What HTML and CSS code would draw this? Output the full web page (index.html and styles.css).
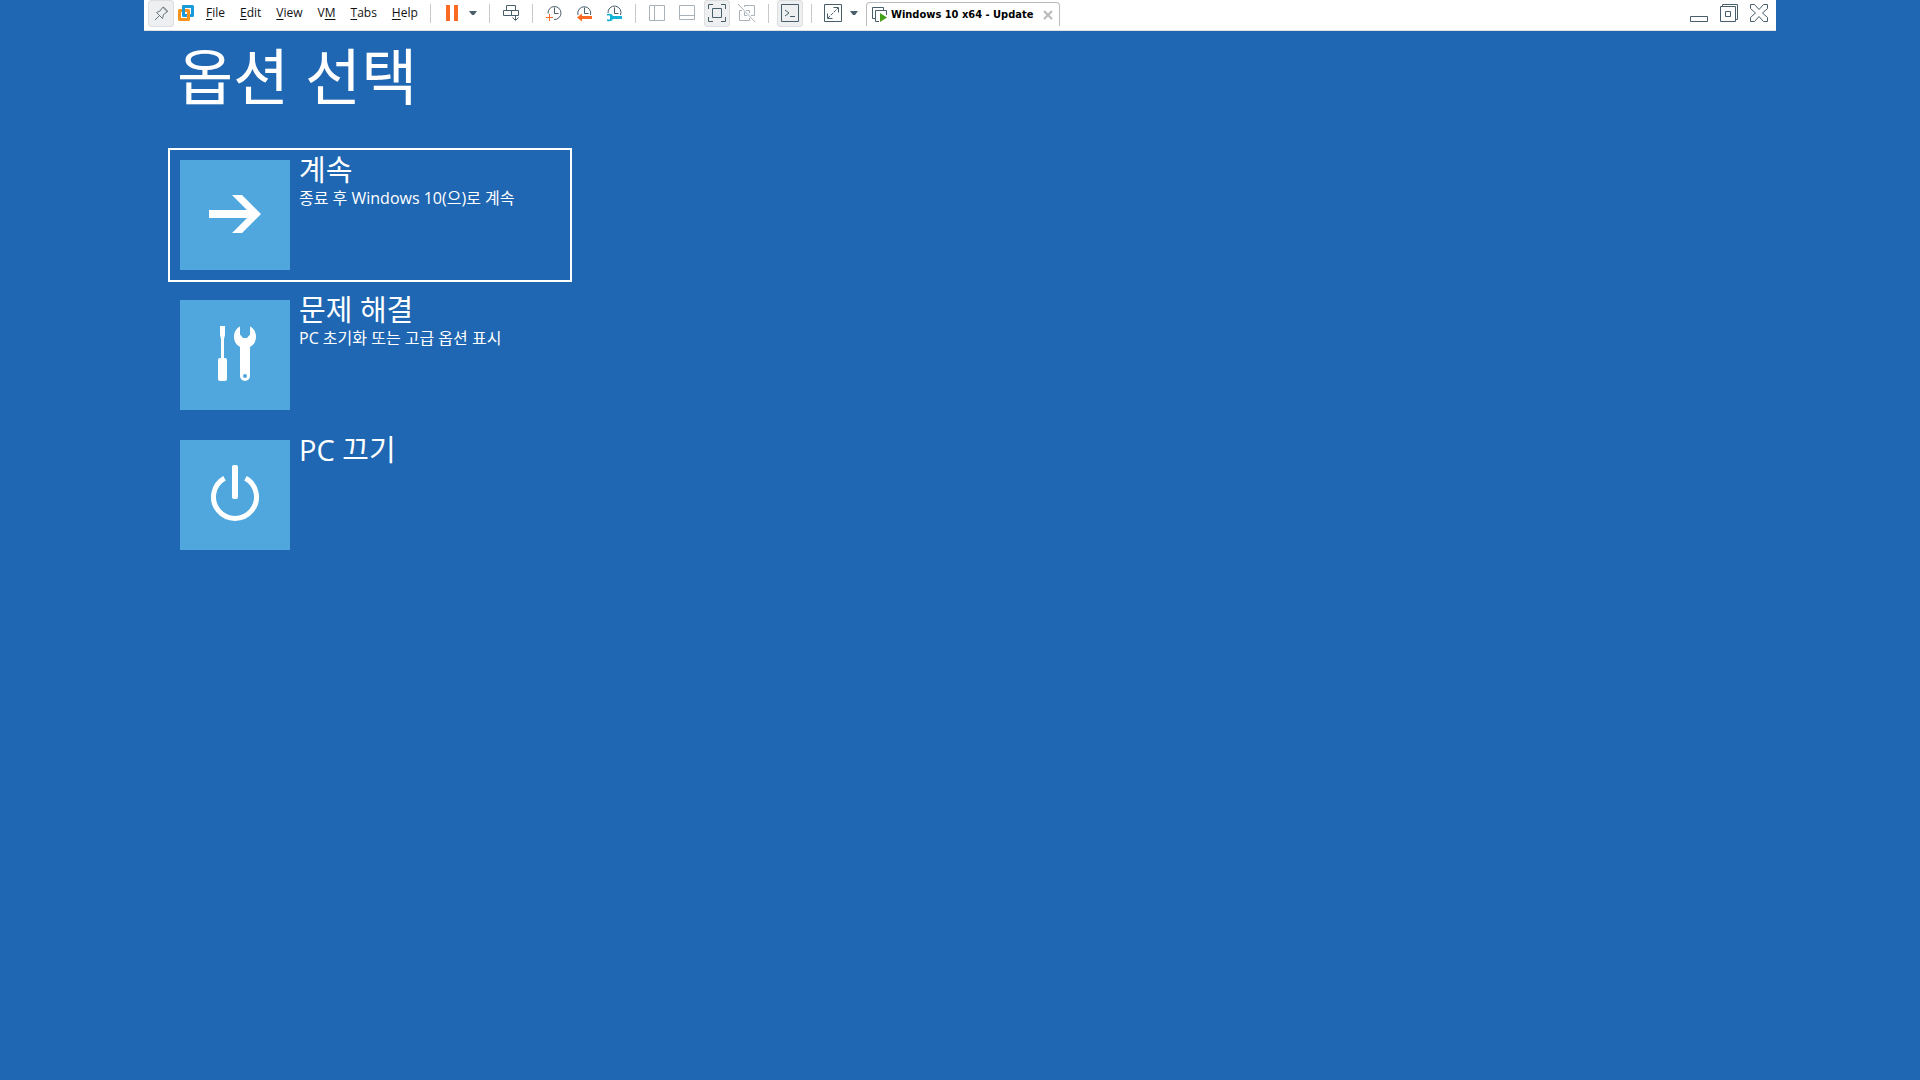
FILE: index.html
```html
<!DOCTYPE html>
<html lang="ko">
<head>
<meta charset="utf-8">
<title>Windows 10 x64 - Update</title>
<link rel="stylesheet" href="styles.css">
</head>
<body>
<header class="toolbar">
  <button class="tool pressed pin" aria-label="Pin"><svg viewBox="0 0 26 27"><path d="M7 20l4.500-4.500M8.500 12.500l6 6 1-4 3.500-2.500.5-1-4-4-1 .5-2.500 3.500zM14.500 7l5 5"/></svg></button>
  <svg class="logo" viewBox="0 0 18 18" aria-hidden="true"><path d="M6.500 2.500h9v9h-9z" stroke="#1a9bd7"/><path d="M2.500 6.500h9v9h-9z" stroke="#f7941d"/><path d="M6.500 9V2.500H9" stroke="#1a9bd7"/></svg>
  <nav class="menu">
    <a href="#"><u>F</u>ile</a>
    <a href="#"><u>E</u>dit</a>
    <a href="#"><u>V</u>iew</a>
    <a href="#">V<u>M</u></a>
    <a href="#"><u>T</u>abs</a>
    <a href="#"><u>H</u>elp</a>
  </nav>
  <div class="group">
    <button class="tool" aria-label="Suspend"><svg viewBox="0 0 26 27"><path class="orange-fill" d="M7 5h4v16H7zM15 5h4v16h-4z"/></svg></button>
    <button class="caret" aria-label="Power options"><svg viewBox="0 0 12 27"><path d="M2 11h8l-3 4H5z"/></svg></button>
  </div>
  <div class="group">
    <button class="tool" aria-label="Send Ctrl+Alt+Del"><svg viewBox="0 0 26 27"><path d="M8.500 5.500h9v5h-9zM5.500 10.500h8v5h-8zM13.500 10.500h7v5h-7zM17.500 15v5M14.500 17.500l3 3 3-3"/></svg></button>
  </div>
  <div class="group">
    <button class="tool" aria-label="Take snapshot"><svg viewBox="0 0 26 27"><path d="M7 13.500a6.500 6.500 0 1 1 6 6M13.500 7.500v6h4"/><path class="orange" d="M5 17.500h7M8.500 14v7"/></svg></button>
    <button class="tool" aria-label="Revert snapshot"><svg viewBox="0 0 26 27"><path d="M7 15a6.500 6.500 0 1 1 12.500 0M13.500 7.500v6h4"/><path class="orange-fill" d="M6 17.500l5-4V16h10v3H11v2.500z"/></svg></button>
    <button class="tool" aria-label="Manage snapshots"><svg viewBox="0 0 26 27"><path d="M7 13a6.500 6.500 0 1 1 12.500 2M13.500 7.500v6h4"/><path class="cyan-fill" d="M6 14q5-1 6 2h9v3h-9q-1 3-6 2v-1.500h3v-4H6z"/></svg></button>
  </div>
  <div class="group">
    <button class="tool muted" aria-label="Show library"><svg viewBox="0 0 26 27"><path d="M5.500 5.500h15v15h-15zM10.500 5.500v15"/></svg></button>
    <button class="tool muted" aria-label="Show thumbnail bar"><svg viewBox="0 0 26 27"><path d="M5.500 5.500h15v14h-15zM5.500 15.500h15"/></svg></button>
    <button class="tool pressed" aria-label="Full screen"><svg viewBox="0 0 26 27"><path d="M4.500 9V4.500H9M17 4.500h4.500V9M21.500 17v4.500H17M9 21.500H4.500V17M8.500 8.500h9v9h-9z"/></svg></button>
    <button class="tool muted" aria-label="Unity"><svg viewBox="0 0 26 27"><path d="M10.500 7V5.500h10v10H17M8 10.500H5.500v10h10V18M12 10.500h3.500V13M10.500 12v3.500H13M4 4l17 18"/></svg></button>
  </div>
  <div class="group">
    <button class="tool pressed" aria-label="Console view"><svg viewBox="0 0 26 27"><path d="M4.500 4.500h17v17h-17z"/><path d="M8 10l4 3-4 3M13 16.500h5"/></svg></button>
  </div>
  <div class="group">
    <button class="tool" aria-label="Stretch guest"><svg viewBox="0 0 26 27"><path d="M4.500 4.500h17v17h-17z"/><path d="M13.500 7.500h5v5M7.500 13.500v5h5"/><path d="M8 18L18 8" stroke-dasharray="3 1"/></svg></button>
    <button class="caret" aria-label="Stretch options"><svg viewBox="0 0 12 27"><path d="M2 11h8l-3 4H5z"/></svg></button>
  </div>
  <div class="tab">
    <svg class="tab-icon" viewBox="0 0 16 16" aria-hidden="true"><path d="M3.500 11.500H.5V.5h11v3M7 14.500H3.500v-11h11V8"/><path d="M8 6l7 4.500L8 15z" class="play"/></svg>
    <span>Windows 10 x64 - Update</span>
    <button class="tab-close" aria-label="Close tab"><svg viewBox="0 0 10 10"><path d="M1 1l8 8M9 1L1 9"/></svg></button>
  </div>
  <div class="window-controls">
    <button class="tool" aria-label="Minimize"><svg viewBox="0 0 26 27"><path d="M4.500 16.500h17v5h-17z"/></svg></button>
    <button class="tool" aria-label="Restore"><svg viewBox="0 0 26 27"><path d="M4.500 6.500h15v15h-15zM6.500 6.500v-2h15v15h-2M9.500 11.500h5v5h-5z"/></svg></button>
    <button class="tool" aria-label="Close"><svg viewBox="0 0 26 27"><path d="M4.500 4.500h4l4.500 5 4.500-5h4v4L16.500 13l5 4.500v4h-4L13 16.500l-4.500 5h-4v-4l5-4.500-5-4.500z"/></svg></button>
  </div>
</header>
<main class="recovery">
  <h1>옵션 선택</h1>
  <div class="options">
    <button class="option selected">
      <svg class="tile" viewBox="0 0 110 110" aria-hidden="true"><path d="M29 50h38L52 35h10l19 19-19 19H52l15-15H29z"/></svg>
      <span class="label"><span class="name">계속</span><span class="hint">종료 후 Windows 10(으)로 계속</span></span>
    </button>
    <button class="option">
      <svg class="tile" viewBox="0 0 110 110" aria-hidden="true"><path d="M40 26h5v9l-1 4v19h1q2 0 2 2v19q0 2-2 2h-5q-2 0-2-2V60q0-2 2-2h1V39l-1-4z"/><path fill-rule="evenodd" d="M60 26.500v8l3 3.500h4l3-3.500v-8c4 2 6 6 6 10 0 5-2 8-6 10.500V76a5 5 0 0 1-10 0V47c-4-2.500-6-5.500-6-10.500 0-4 2-8 6-10zM65 74a2 2 0 1 0 0 4 2 2 0 0 0 0-4z"/></svg>
      <span class="label"><span class="name">문제 해결</span><span class="hint">PC 초기화 또는 고급 옵션 표시</span></span>
    </button>
    <button class="option">
      <svg class="tile" viewBox="0 0 110 110" aria-hidden="true"><rect x="52" y="25" width="6" height="34" rx="2"/><path class="ring" d="M44.500 38.200a21.500 21.500 0 1 0 21 0"/></svg>
      <span class="label"><span class="name">PC 끄기</span></span>
    </button>
  </div>
</main>
</body>
</html>
```
FILE: styles.css
```css
* { box-sizing: border-box; }

body {
  margin: 0;
  min-height: 100vh;
  background: #1f67b2;
  color: #fff;
  font-family: "Open Sans", "Noto Sans CJK KR", sans-serif;
}

button {
  margin: 0;
  padding: 0;
  border: 0;
  background: none;
  color: inherit;
  font: inherit;
}

svg { display: block; }

/* Virtual machine toolbar */
.toolbar {
  display: flex;
  align-items: flex-start;
  width: 85%;
  height: 31px;
  margin: 0 auto;
  padding: 0 4px;
  border-bottom: 1px solid #dfe0e2;
  background: #fff;
  color: #111;
}

.tool { flex: none; width: 26px; height: 27px; }

.tool svg, .caret svg { width: 100%; height: 27px; }

.tool path, .tab-icon path {
  fill: none;
  stroke: #485f6b;
}

.pressed {
  border-radius: 4px;
  background: #edeff0;
  box-shadow: inset 0 0 0 1px #dcdedf;
}

.pin path { stroke: #6b7880; }
.muted path { stroke: #a8b2b8; }
.tool .orange { stroke: #fb6a22; }
.tool .orange-fill { fill: #fb6a22; stroke: none; }
.tool .cyan-fill { fill: #14b4d6; stroke: none; }

.caret { width: 12px; height: 27px; margin-left: -2px; }
.caret path { fill: #485f6b; }

.logo {
  flex: none;
  width: 18px;
  height: 18px;
  margin: 4px 0 0 3px;
  fill: none;
  stroke-linejoin: round;
  stroke-width: 3;
}

.menu {
  display: flex;
  flex: none;
  gap: 15px;
  width: 235px;
  padding-left: 11px;
  font-size: 12px;
  line-height: 26px;
}

.menu a { color: inherit; text-decoration: none; }
.menu u { text-underline-offset: 2px; }

.group { display: flex; flex: none; gap: 4px; }

.group::before {
  width: 1px;
  height: 19px;
  margin: 4px 4px 0 0;
  background: #c6c9cb;
  content: "";
}

.group + .group { margin-left: 8px; }
.caret + .group, .menu + .group + .group { margin-left: 10px; }

.tab {
  display: flex;
  flex: none;
  align-items: center;
  gap: 3px;
  width: 194px;
  height: 24px;
  margin: 2px 0 0 6px;
  padding: 0 6px 0 5px;
  border: 1px solid #b9bcbe;
  border-bottom: 0;
  border-radius: 4px 4px 0 0;
  color: #000;
  font-family: "DejaVu Sans Condensed", "DejaVu Sans", sans-serif;
  font-size: 11px;
  font-weight: bold;
  white-space: nowrap;
}

.tab-icon { flex: none; width: 16px; height: 16px; }
.tab-icon .play { fill: #43a017; stroke: none; }
.tab-close { width: 10px; height: 10px; margin-left: auto; }
.tab-close path { stroke: #b9b9b9; stroke-width: 2; }

.window-controls { display: flex; gap: 4px; margin-left: auto; }

/* Recovery screen */
.recovery { padding: 4px 168px 40px; }

h1 {
  margin: 0 0 29px;
  padding-left: 9px;
  font-size: 61px;
  font-weight: 400;
  line-height: 84px;
}

.options {
  display: flex;
  flex-direction: column;
  gap: 6px;
  max-width: 404px;
}

.option {
  display: flex;
  align-items: flex-start;
  gap: 9px;
  padding: 0 10px;
  border: 2px solid transparent;
  text-align: left;
}

.selected { border-color: #fff; }

.tile {
  flex: none;
  width: 110px;
  height: 110px;
  margin: 10px 0;
  background: #4fa7dd;
  fill: #fff;
}

.tile .ring { fill: none; stroke: #fff; stroke-width: 5; }

.label {
  display: flex;
  flex-direction: column;
  padding-top: 4px;
  white-space: nowrap;
}

.name { font-size: 29px; line-height: 32px; }
.hint { font-size: 16px; line-height: 24px; }
```
